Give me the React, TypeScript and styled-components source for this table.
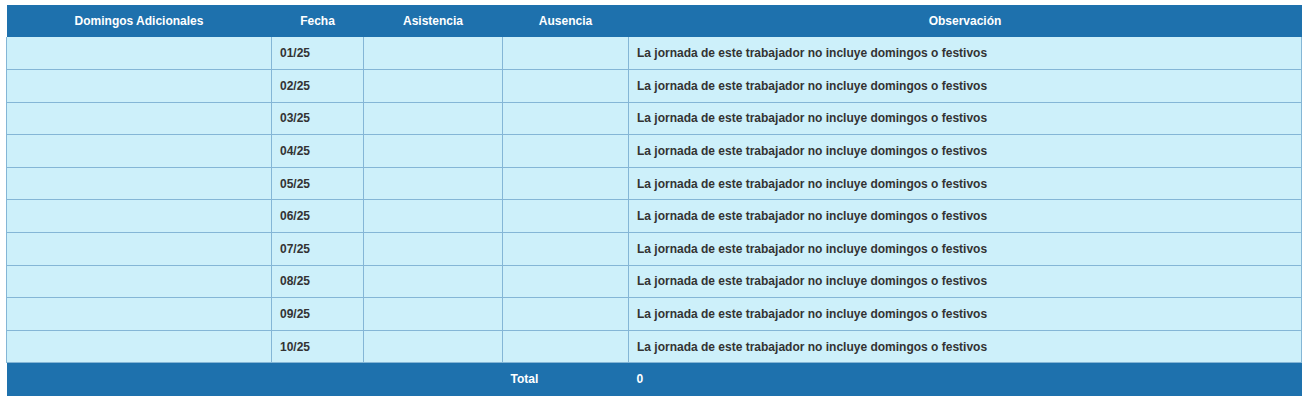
import styled, { createGlobalStyle } from "styled-components";

const GlobalStyle = createGlobalStyle`
    body {
        margin: 0;
        padding: 5px 6px;
        background: #ffffff;
        font-family: "Liberation Sans", Arial, sans-serif;
    }
`;

const Table = styled.table`
    width: 1295px;
    border-collapse: collapse;
    table-layout: fixed;
    font-size: 12px;
    font-weight: bold;
`;

const HeadCell = styled.th<{ $w: number }>`
    width: ${(p) => p.$w}px;
    height: 32px;
    padding: 0 8px;
    background: #1e71ad;
    color: #ffffff;
    text-align: center;
    vertical-align: middle;
    border: none;
    box-sizing: border-box;
`;

const Row = styled.tr`
    height: 32.6px;
`;

const Cell = styled.td`
    padding: 0 8px;
    background: #cdf0fa;
    color: #333333;
    text-align: left;
    vertical-align: middle;
    border: 1px solid #84b6d6;
    border-top: none;
    white-space: nowrap;
`;

const FootCell = styled.td`
    height: 31px;
    padding: 0 8px 2px;
    background: #1e71ad;
    color: #ffffff;
    text-align: left;
    vertical-align: middle;
`;

const columns = [
    { label: "Domingos Adicionales", w: 265 },
    { label: "Fecha", w: 92 },
    { label: "Asistencia", w: 139 },
    { label: "Ausencia", w: 126 },
    { label: "Observación", w: 673 },
];

const fechas = ["01/25", "02/25", "03/25", "04/25", "05/25", "06/25", "07/25", "08/25", "09/25", "10/25"];

export default function App() {
    return (
        <>
            <GlobalStyle />
            <Table>
                <thead>
                    <tr>
                        {columns.map((c) => (
                            <HeadCell key={c.label} $w={c.w}>
                                {c.label}
                            </HeadCell>
                        ))}
                    </tr>
                </thead>
                <tbody>
                    {fechas.map((f) => (
                        <Row key={f}>
                            <Cell></Cell>
                            <Cell>{f}</Cell>
                            <Cell></Cell>
                            <Cell></Cell>
                            <Cell>La jornada de este trabajador no incluye domingos o festivos</Cell>
                        </Row>
                    ))}
                </tbody>
                <tfoot>
                    <tr>
                        <FootCell colSpan={3}></FootCell>
                        <FootCell>Total</FootCell>
                        <FootCell>0</FootCell>
                    </tr>
                </tfoot>
            </Table>
        </>
    );
}
